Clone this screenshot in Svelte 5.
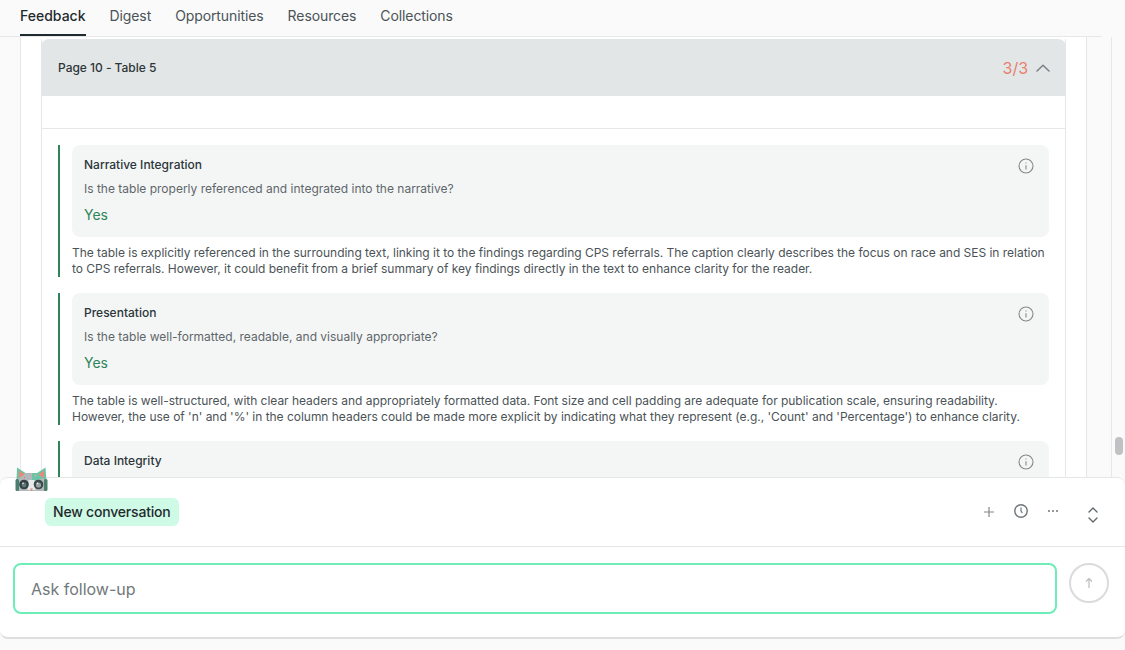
<script>
  const tabs = ['Feedback', 'Digest', 'Opportunities', 'Resources', 'Collections'];
  const items = [
    {
      title: 'Narrative Integration',
      q: 'Is the table properly referenced and integrated into the narrative?',
      a: 'Yes',
      body: 'The table is explicitly referenced in the surrounding text, linking it to the findings regarding CPS referrals. The caption clearly describes the focus on race and SES in relation to CPS referrals. However, it could benefit from a brief summary of key findings directly in the text to enhance clarity for the reader.'
    },
    {
      title: 'Presentation',
      q: 'Is the table well-formatted, readable, and visually appropriate?',
      a: 'Yes',
      body: "The table is well-structured, with clear headers and appropriately formatted data. Font size and cell padding are adequate for publication scale, ensuring readability. However, the use of 'n' and '%' in the column headers could be made more explicit by indicating what they represent (e.g., 'Count' and 'Percentage') to enhance clarity."
    },
    { title: 'Data Integrity', q: '', a: '', body: '' }
  ];
</script>

<div class="page">
  <nav class="tabs">
    {#each tabs as t, i}
      <span class="tab" class:active={i === 0}>{t}</span>
    {/each}
  </nav>

  <div class="content">
    <div class="panel">
      <section class="card">
        <header class="card-head">
          <span class="card-title">Page 10 - Table 5</span>
          <span class="score">3/3</span>
          <svg class="chev" width="14" height="14" viewBox="0 0 14 14" fill="none" stroke="#7b8184" stroke-width="1.5" stroke-linecap="round" stroke-linejoin="round"><path d="M1 10 7 4.2 13 10"/></svg>
        </header>
        <div class="blank"></div>
        <div class="list">
          {#each items as it}
            <article class="item">
              <div class="box">
                <div class="box-text">
                  <h3>{it.title}</h3>
                  {#if it.q}<p class="q">{it.q}</p>{/if}
                  {#if it.a}<p class="a">{it.a}</p>{/if}
                </div>
                <svg class="info" width="16" height="16" viewBox="0 0 16 16" fill="none" stroke="#83888b" stroke-width="1.1"><circle cx="8" cy="8" r="7"/><path d="M8 7.2v4.2" /><path d="M8 4.4v1.1" /></svg>
              </div>
              {#if it.body}<p class="body">{it.body}</p>{/if}
            </article>
          {/each}
        </div>
      </section>
    </div>
    <div class="gutter"><div class="thumb"></div></div>
  </div>

  <section class="chat">
    <svg class="cat" width="33" height="25" viewBox="0 0 33 25" aria-hidden="true">
      <path fill="#6cc3a5" d="M2 0.5 10.5 6H22L30.5 0.5 31.5 14 31 24H2L1.5 14z"/>
      <path fill="#b3b8ba" d="M10 6h7v8h-1v10H3L2.5 13 5 9z"/>
      <path fill="#b3b8ba" d="M20 14l8-3 3 3v10H17V14z"/>
      <path fill="#e98a78" d="M4 3.5 9.5 7.5 4 11z"/>
      <path fill="#e98a78" d="M29 3.5 23.5 7.5 29 11z"/>
      <path fill="#e8ebeb" d="M13.5 13h6l1 10h-8z"/>
      <rect x="0.5" y="12" width="3.5" height="12" rx="1.5" fill="#4b7f6d"/>
      <rect x="29" y="12" width="3.5" height="12" rx="1.5" fill="#4b7f6d"/>
      <circle cx="9" cy="17.5" r="4.8" fill="#344244"/>
      <circle cx="23.5" cy="17.5" r="4.8" fill="#3d4a4c"/>
      <circle cx="9" cy="18" r="2.4" fill="#5f7a76"/>
      <circle cx="23.5" cy="18" r="2.6" fill="#97a3a3"/>
      <circle cx="8" cy="16.3" r="0.9" fill="#dfe6e6"/>
      <circle cx="22.5" cy="16.3" r="0.9" fill="#dfe6e6"/>
      <path fill="#ea8774" d="M15 21.5h3l-1.5 2.5z"/>
      <rect x="9" y="10" width="1" height="1" fill="#e8756a"/>
      <rect x="20" y="8" width="1" height="1" fill="#f4b5aa"/>
    </svg>
    <div class="chat-top">
      <span class="pill">New conversation</span>
      <div class="tools">
        <svg class="plus" width="16" height="16" viewBox="0 0 16 16" fill="none" stroke="#84898c" stroke-width="1.2"><path d="M8 3v10M3 8h10"/></svg>
        <svg width="16" height="16" viewBox="0 0 16 16" fill="none" stroke="#6f7679" stroke-width="1.4"><circle cx="8" cy="8" r="6.2"/><path d="M8 4.6V8l1.4 2" stroke-width="1.2"/></svg>
        <svg width="16" height="16" viewBox="0 0 16 16" fill="#6f7679"><circle cx="4" cy="8" r="1"/><circle cx="8" cy="8" r="1"/><circle cx="12" cy="8" r="1"/></svg>
        <svg class="updown" width="14" height="18" viewBox="0 0 14 18" fill="none" stroke="#5f666a" stroke-width="1.3" stroke-linecap="round" stroke-linejoin="round"><path d="M3 6l4-4 4 4M3 12l4 4 4-4"/></svg>
      </div>
    </div>
    <div class="chat-input">
      <div class="input">Ask follow-up</div>
      <div class="send">
        <svg width="12" height="12" viewBox="0 0 12 12" fill="none" stroke="#b9bdbf" stroke-width="1.2"><path d="M6 11V1.5M3 4.5l3-3 3 3"/></svg>
      </div>
    </div>
  </section>
</div>

<style>
  :global(body) { margin: 0; background: #fafafa; }
  .page {
    width: 1125px;
    height: 650px;
    overflow: hidden;
    position: relative;
    font-family: Inter, "Liberation Sans", sans-serif;
    color: #1f2a2e;
    background: #fafafa;
  }
  .tabs {
    display: flex;
    gap: 24px;
    height: 36px;
    padding-left: 20px;
    width: 1082px;
    box-sizing: content-box;
    border-bottom: 1px solid #e6e8e8;
  }
  .tab {
    font-size: 14px;
    line-height: 32px;
    letter-spacing: -0.1px;
    color: #4b5357;
    height: 36px;
    box-sizing: border-box;
  }
  .tab.active {
    color: #1f2a2e;
    font-weight: 500;
    letter-spacing: 0;
    border-bottom: 2px solid #1f2a2e;
  }
  .content {
    display: flex;
    height: 440px;
    overflow: hidden;
    padding-left: 20px;
  }
  .panel {
    width: 1067px;
    box-sizing: border-box;
    background: #fff;
    border-left: 1px solid #e6e8e8;
    border-right: 1px solid #e6e8e8;
    padding: 2px 20px 0 20px;
    overflow: hidden;
  }
  .card {
    width: 1025px;
    box-sizing: border-box;
    border-left: 1px solid #e6e8e8;
    border-right: 1px solid #e6e8e8;
  }
  .card-head {
    display: flex;
    align-items: center;
    height: 57px;
    margin: 0 -1px;
    padding: 0 16px 0 17px;
    background: #e3e6e7;
    border-radius: 8px 8px 0 0;
  }
  .card-title { font-size: 12px; font-weight: 500; flex: 1; color: #2c3539; letter-spacing: -0.02px; }
  .score { font-size: 16px; color: #e8806e; letter-spacing: -0.03px; margin-right: 8px; }
  .chev { display: block; }
  .blank { height: 32px; border-bottom: 1px solid #e6e8e8; }
  .list {
    padding: 16px 16px 0;
    display: flex;
    flex-direction: column;
    gap: 16px;
  }
  .item {
    border-left: 2px solid #2f855a;
    padding-left: 12px;
  }
  .box {
    background: #f4f6f6;
    border-radius: 8px;
    height: 92px;
    box-sizing: border-box;
    padding: 12px 15px 0 12px;
    display: flex;
    justify-content: space-between;
  }
  h3 { margin: 0; font-size: 12px; line-height: 16px; font-weight: 500; color: #2c3539; }
  .q { margin: 8px 0 0; font-size: 12px; line-height: 16px; color: #5f666a; }
  .a { margin: 8px 0 0; font-size: 14px; line-height: 20px; color: #2f855a; }
  .info { margin-top: 1px; }
  .body {
    margin: 8px 0 0;
    font-size: 12px;
    line-height: 16px;
    letter-spacing: -0.025px;
    color: #4b5357;
  }
  .gutter {
    width: 24px;
    margin-left: 0;
    border-right: 1px solid #e6e8e8;
    position: relative;
  }
  .thumb {
    position: absolute;
    left: 28px;
    top: 400px;
    width: 8px;
    height: 18px;
    border-radius: 4px;
    background: #bfc1c2;
  }
  .chat {
    position: relative;
    height: 162px;
    box-sizing: border-box;
    background: #fff;
    border-top: 1px solid #e6e8e8;
    border-bottom: 2px solid #dcdedf;
    border-radius: 8px;
  }
  .cat { position: absolute; left: 15px; top: -11px; }
  .chat-top {
    height: 69px;
    box-sizing: border-box;
    border-bottom: 1px solid #e6e8e8;
    display: flex;
    align-items: flex-start;
    padding: 20px 25px 0 45px;
    justify-content: space-between;
  }
  .pill {
    background: #cffae5;
    border-radius: 6px;
    font-size: 14px;
    font-weight: 500;
    letter-spacing: -0.2px;
    line-height: 28px;
    padding: 0 8px;
    color: #1f2a2e;
  }
  .tools { display: flex; align-items: flex-start; gap: 16px; padding-top: 5px; }
  .plus { margin-top: 1px; }
  .updown { margin-left: 9px; margin-top: 3px; }
  .chat-input {
    display: flex;
    padding: 16px 16px 0 13px;
    gap: 12px;
    align-items: flex-start;
  }
  .input {
    width: 1044px;
    height: 51px;
    box-sizing: border-box;
    border: 2px solid #6eedb8;
    border-radius: 8px;
    padding: 0 16px;
    font-size: 16px;
    line-height: 49px;
    color: #71787b;
  }
  .send {
    width: 40px;
    height: 40px;
    box-sizing: border-box;
    border: 2px solid #d9dbdc;
    border-radius: 50%;
    display: flex;
    align-items: center;
    justify-content: center;
  }
</style>
